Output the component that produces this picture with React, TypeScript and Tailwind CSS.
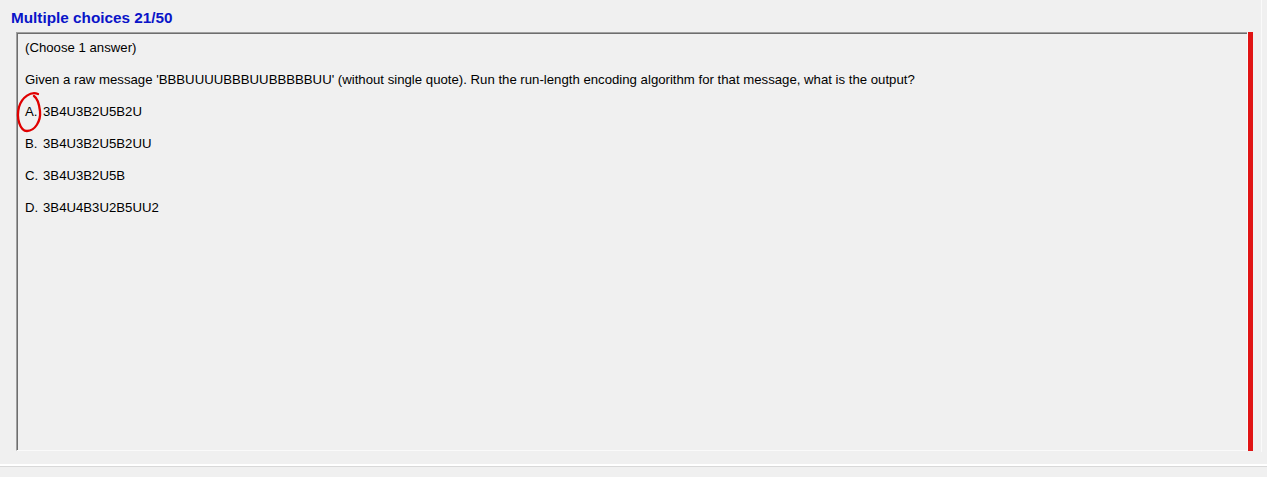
import React from "react";

const choices = [
  ["A.", "3B4U3B2U5B2U"],
  ["B.", "3B4U3B2U5B2UU"],
  ["C.", "3B4U3B2U5B"],
  ["D.", "3B4U4B3U2B5UU2"],
];

export default function App() {
  return (
    <div className="relative w-[1267px] h-[477px] bg-[#f0f0f0] font-['Liberation_Sans',Arial,sans-serif] text-[13.2px] text-black overflow-hidden">
      <div className="h-[32px] pl-[11px] pt-[9px] text-[15.3px] leading-[17px] font-bold text-[#0a14c8]">
        Multiple choices 21/50
      </div>
      <div className="ml-[16px] w-[1237px] h-[419px] flex">
        <div className="flex-1 border-t border-l border-[#a0a0a0] border-b border-b-[#fafafa]">
          <div className="h-full border-t border-l border-[#6e6e6e] pl-[7px] pt-[6px] flex flex-col gap-[16px] leading-[16px]">
            <div>(Choose 1 answer)</div>
            <div>
              Given a raw message 'BBBUUUUBBBUUBBBBBUU' (without single quote). Run the run-length encoding algorithm for that message, what is the output?
            </div>
            {choices.map(([l, t]) => (
              <div key={l} className="flex">
                <span className="w-[18px]">{l}</span>
                <span>{t}</span>
              </div>
            ))}
          </div>
        </div>
        <div className="w-[1px] bg-[#fafafa]" />
        <div className="w-[5px] bg-[#e01414]" />
      </div>
      <div className="h-[13px]" />
      <div className="h-[2px] bg-white" />
      <div className="h-[1px] bg-[#d9d9d9]" />
      <div className="absolute left-[1261px] top-0 h-[452px] w-[1px] bg-[#fafafa]" />
      <svg className="absolute left-[12px] top-[88px]" width="36" height="48" viewBox="0 0 36 48">
        <path
          d="M26 6 C 19 3, 10 9, 7 19 C 4 30, 8 43, 15 43 C 23 43, 29 33, 28 23 C 27 15, 25 10, 22 8"
          fill="none"
          stroke="#e00000"
          strokeWidth="2.3"
          strokeLinecap="round"
        />
      </svg>
    </div>
  );
}
